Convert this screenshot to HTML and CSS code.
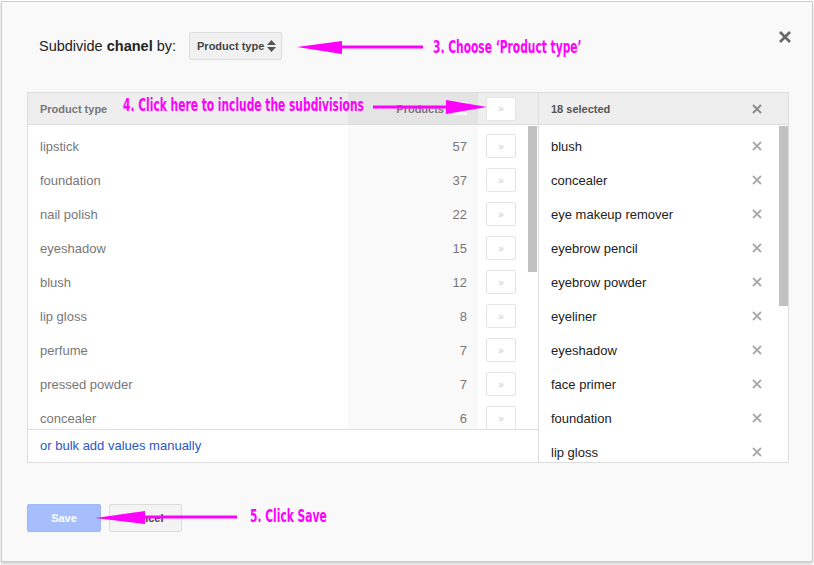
FILE: index.html
```html
<!DOCTYPE html>
<html lang="en">
<head>
    <meta charset="UTF-8">
    <title>Subdivide product group</title>
    <link rel="stylesheet" href="styles.css">
</head>
<body>
    <div class="dialog">
        <button class="close-btn">
            <svg width="12" height="12" viewBox="0 0 12 12"><path d="M1 1L11 11M11 1L1 11" stroke="#666" stroke-width="2.6"/></svg>
        </button>

        <div class="title-row">
            <span class="title">Subdivide <b>chanel</b> by:</span>
            <button class="select">
                <span>Product type</span>
                <svg width="9" height="12" viewBox="0 0 9 12"><path d="M4.5 0L9 5H0z M4.5 12L0 7h9z" fill="#555"/></svg>
            </button>
        </div>

        <div class="picker">
            <div class="avail">
                <div class="phead">
                    <div class="c-name">Product type</div>
                    <div class="c-count">Products <span class="sort-box"></span></div>
                    <div class="c-add"><span class="add-btn">&raquo;</span></div>
                </div>
                <div class="list avail-list">
                    <div class="row"><div class="c-name">lipstick</div><div class="c-count">57</div><div class="c-add"><span class="add-btn">&raquo;</span></div></div>
                    <div class="row"><div class="c-name">foundation</div><div class="c-count">37</div><div class="c-add"><span class="add-btn">&raquo;</span></div></div>
                    <div class="row"><div class="c-name">nail polish</div><div class="c-count">22</div><div class="c-add"><span class="add-btn">&raquo;</span></div></div>
                    <div class="row"><div class="c-name">eyeshadow</div><div class="c-count">15</div><div class="c-add"><span class="add-btn">&raquo;</span></div></div>
                    <div class="row"><div class="c-name">blush</div><div class="c-count">12</div><div class="c-add"><span class="add-btn">&raquo;</span></div></div>
                    <div class="row"><div class="c-name">lip gloss</div><div class="c-count">8</div><div class="c-add"><span class="add-btn">&raquo;</span></div></div>
                    <div class="row"><div class="c-name">perfume</div><div class="c-count">7</div><div class="c-add"><span class="add-btn">&raquo;</span></div></div>
                    <div class="row"><div class="c-name">pressed powder</div><div class="c-count">7</div><div class="c-add"><span class="add-btn">&raquo;</span></div></div>
                    <div class="row"><div class="c-name">concealer</div><div class="c-count">6</div><div class="c-add"><span class="add-btn">&raquo;</span></div></div>
                    <div class="scroll-thumb thumb-left"></div>
                </div>
                <div class="pfoot"><a href="#">or bulk add values manually</a></div>
            </div>

            <div class="chosen">
                <div class="phead">
                    <div class="sel-count">18 selected</div>
                    <svg class="x-icon" width="10" height="10" viewBox="0 0 10 10"><path d="M1 1L9 9M9 1L1 9" stroke="#888" stroke-width="1.8"/></svg>
                </div>
                <div class="list chosen-list">
                    <div class="srow"><span>blush</span><svg class="x-icon" width="10" height="10" viewBox="0 0 10 10"><path d="M1 1L9 9M9 1L1 9" stroke="#aaa" stroke-width="1.8"/></svg></div>
                    <div class="srow"><span>concealer</span><svg class="x-icon" width="10" height="10" viewBox="0 0 10 10"><path d="M1 1L9 9M9 1L1 9" stroke="#aaa" stroke-width="1.8"/></svg></div>
                    <div class="srow"><span>eye makeup remover</span><svg class="x-icon" width="10" height="10" viewBox="0 0 10 10"><path d="M1 1L9 9M9 1L1 9" stroke="#aaa" stroke-width="1.8"/></svg></div>
                    <div class="srow"><span>eyebrow pencil</span><svg class="x-icon" width="10" height="10" viewBox="0 0 10 10"><path d="M1 1L9 9M9 1L1 9" stroke="#aaa" stroke-width="1.8"/></svg></div>
                    <div class="srow"><span>eyebrow powder</span><svg class="x-icon" width="10" height="10" viewBox="0 0 10 10"><path d="M1 1L9 9M9 1L1 9" stroke="#aaa" stroke-width="1.8"/></svg></div>
                    <div class="srow"><span>eyeliner</span><svg class="x-icon" width="10" height="10" viewBox="0 0 10 10"><path d="M1 1L9 9M9 1L1 9" stroke="#aaa" stroke-width="1.8"/></svg></div>
                    <div class="srow"><span>eyeshadow</span><svg class="x-icon" width="10" height="10" viewBox="0 0 10 10"><path d="M1 1L9 9M9 1L1 9" stroke="#aaa" stroke-width="1.8"/></svg></div>
                    <div class="srow"><span>face primer</span><svg class="x-icon" width="10" height="10" viewBox="0 0 10 10"><path d="M1 1L9 9M9 1L1 9" stroke="#aaa" stroke-width="1.8"/></svg></div>
                    <div class="srow"><span>foundation</span><svg class="x-icon" width="10" height="10" viewBox="0 0 10 10"><path d="M1 1L9 9M9 1L1 9" stroke="#aaa" stroke-width="1.8"/></svg></div>
                    <div class="srow"><span>lip gloss</span><svg class="x-icon" width="10" height="10" viewBox="0 0 10 10"><path d="M1 1L9 9M9 1L1 9" stroke="#aaa" stroke-width="1.8"/></svg></div>
                    <div class="scroll-thumb thumb-right"></div>
                </div>
            </div>
        </div>

        <div class="actions">
            <button class="btn btn-save">Save</button>
            <button class="btn btn-cancel">Cancel</button>
        </div>
    </div>

    <!-- tutorial annotations drawn over the dialog -->
    <svg class="arrows" width="814" height="565" viewBox="0 0 814 565">
        <g fill="#f0f" stroke="#f0f">
            <line x1="340" y1="47" x2="423" y2="47" stroke-width="3"/>
            <polygon points="297,47 342,41 342,54" stroke="none"/>
            <line x1="373" y1="107" x2="448" y2="107" stroke-width="3"/>
            <polygon points="487,107 446,100 446,114" stroke="none"/>
            <line x1="143" y1="517" x2="237" y2="517" stroke-width="3"/>
            <polygon points="95,518 145,511 145,524" stroke="none"/>
        </g>
    </svg>
    <span class="note note-3">3. Choose ‘Product type’</span>
    <span class="note note-4">4. Click here to include the subdivisions</span>
    <span class="note note-5">5. Click Save</span>
</body>
</html>
```

FILE: styles.css
```css
* {
    margin: 0;
    padding: 0;
    box-sizing: border-box;
}

body {
    font-family: "Liberation Sans", Arial, sans-serif;
    font-size: 13px;
    color: #222;
    background-color: #fff;
    position: relative;
    width: 814px;
    height: 565px;
    overflow: hidden;
}

button {
    font-family: inherit;
    cursor: pointer;
}

.dialog {
    position: relative;
    margin: 1px 0 0 1px;
    width: 812px;
    height: 561px;
    background-color: #f9f9f9;
    border: 1px solid #ccc;
    box-shadow: 0 2px 3px rgba(0,0,0,0.2);
    padding: 30px 0 0 25px;
}

.close-btn {
    position: absolute;
    top: 29px;
    right: 21px;
    background: none;
    border: none;
    display: flex;
}

.title-row {
    display: flex;
    align-items: center;
    height: 28px;
}

.title {
    margin-left: 12px;
    font-size: 14.5px;
    color: #222;
}

.select {
    margin-left: 13px;
    height: 28px;
    width: 93px;
    padding: 0 5px 0 7px;
    display: flex;
    align-items: center;
    justify-content: space-between;
    white-space: nowrap;
    background-color: #f1f1f1;
    border: 1px solid #ddd;
    border-radius: 2px;
    font-size: 11px;
    font-weight: bold;
    color: #444;
}

/* two-panel picker */
.picker {
    margin-top: 32px;
    width: 762px;
    height: 371px;
    display: flex;
    background-color: #fff;
    border: 1px solid #ddd;
}

.avail {
    width: 511px;
    border-right: 1px solid #ddd;
    display: flex;
    flex-direction: column;
}

.chosen {
    flex: 1;
    display: flex;
    flex-direction: column;
    min-width: 0;
}

.phead {
    height: 32px;
    flex-shrink: 0;
    display: flex;
    background-color: #eee;
    border-bottom: 1px solid #ddd;
    font-size: 11px;
    font-weight: bold;
    color: #777;
}

.c-name {
    width: 320px;
    padding-left: 12px;
    display: flex;
    align-items: center;
}

.c-count {
    width: 130px;
    padding-right: 11px;
    display: flex;
    align-items: center;
    justify-content: flex-end;
}

.c-add {
    width: 60px;
    padding-left: 8px;
    display: flex;
    align-items: center;
}

.phead .c-count {
    background-color: #e4e4e4;
    padding-right: 10px;
    gap: 9px;
}

.sort-box {
    width: 15px;
    height: 15px;
    background-color: #f6f6f6;
    border: 1px solid #e8e8e8;
}

.add-btn {
    width: 30px;
    height: 24px;
    display: flex;
    align-items: center;
    justify-content: center;
    background-color: #fff;
    border: 1px solid #e4e4e4;
    border-radius: 2px;
    color: #ccc;
    font-size: 10px;
    font-weight: normal;
}

.list {
    position: relative;
    overflow: hidden;
    padding-top: 4px;
}

.avail-list {
    height: 304px;
    background: linear-gradient(to right, #fff 320px, #f9f9f9 320px, #f9f9f9 450px, #fff 450px);
}

.row {
    height: 34px;
    display: flex;
    color: #777;
}

.pfoot {
    flex: 1;
    border-top: 1px solid #ddd;
    padding: 0 0 2px 12px;
    display: flex;
    align-items: center;
}

.pfoot a {
    color: #2a57c9;
    text-decoration: none;
}

.chosen .phead {
    align-items: center;
    justify-content: space-between;
    padding: 0 26px 0 12px;
    color: #555;
}

.chosen-list {
    flex: 1;
}

.srow {
    height: 34px;
    display: flex;
    align-items: center;
    justify-content: space-between;
    padding: 0 26px 0 12px;
    color: #222;
}

.x-icon {
    display: block;
}

.scroll-thumb {
    position: absolute;
    top: 1px;
    width: 9px;
    background-color: #c1c1c1;
}

.thumb-left {
    right: 1px;
    height: 146px;
}

.thumb-right {
    right: 0;
    height: 180px;
}

/* footer buttons */
.actions {
    margin-top: 41px;
    display: flex;
    gap: 8px;
}

.btn {
    width: 74px;
    height: 28px;
    border-radius: 2px;
    font-size: 11px;
    font-weight: bold;
}

.btn-save {
    background-color: #a6bffc;
    border: 1px solid #9db7f7;
    color: #fff;
}

.btn-cancel {
    width: 73px;
    background-color: #f3f3f3;
    border: 1px solid #dcdcdc;
    color: #444;
}

/* annotations */
.arrows {
    position: absolute;
    top: 0;
    left: 0;
    pointer-events: none;
}

.note {
    position: absolute;
    font-family: "Liberation Sans Narrow", "DejaVu Sans Condensed", sans-serif;
    font-weight: bold;
    font-size: 18px;
    line-height: 18px;
    color: #f0f;
    white-space: nowrap;
    transform-origin: left center;
    transform: scaleX(0.66);
}

.note-3 { left: 433px; top: 38px; }
.note-4 { left: 123px; top: 96px; }
.note-5 { left: 250px; top: 507px; }
```
